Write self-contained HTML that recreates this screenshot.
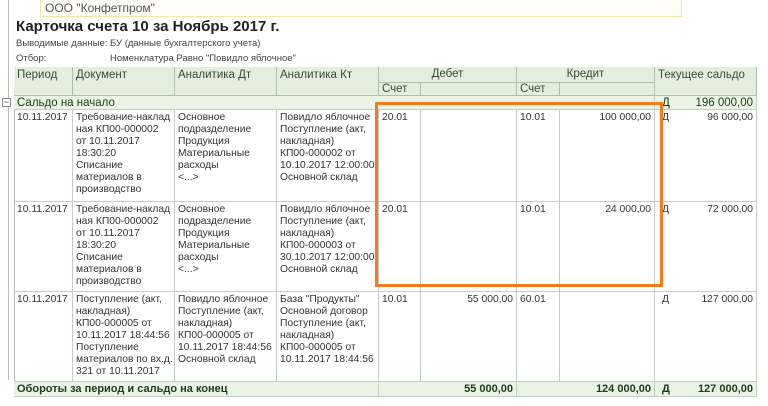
<!DOCTYPE html><html><head><meta charset="utf-8"><style>
body{margin:0;width:768px;height:406px;overflow:hidden;background:#fff;font-family:"Liberation Sans",sans-serif;color:#333;position:relative}
div{position:absolute;box-sizing:border-box}
.c{font-size:10.3px;line-height:12px;padding:2px 3px;border-right:1px solid #c2cfc2;border-bottom:1px solid #c2cfc2;white-space:nowrap;overflow:hidden}
.h{background:#e3efdc;border-color:#aebfae;font-size:11.5px;color:#3a4a3a}
.r{text-align:right}
.g{background:#eaf4e4}
.b{font-weight:bold;color:#1e3a1e;font-size:11px}
</style></head><body>
<div style="left:8px;top:0;width:1px;height:380px;background:#bbb"></div>
<div style="left:40px;top:0;width:642px;height:17px;border:1px solid #eee8a0;border-top:none;background:#fdfdf6;font-size:12px;padding:1px 4px;color:#555">ООО "Конфетпром"</div>
<div style="left:16px;top:18px;font-size:15px;font-weight:bold;color:#222">Карточка счета 10 за Ноябрь 2017 г.</div>
<div style="left:16px;top:38px;font-size:9.5px;color:#444">Выводимые данные:</div>
<div style="left:110px;top:38px;font-size:9.5px;color:#444">БУ (данные бухгалтерского учета)</div>
<div style="left:16px;top:53px;font-size:9.5px;color:#444">Отбор:</div>
<div style="left:110px;top:53px;font-size:9.5px;color:#444">Номенклатура Равно "Повидло яблочное"</div>
<div style="left:14px;top:67px;width:743px;height:1px;background:#aebfae"></div>
<div style="left:14px;top:67px;width:1px;height:330px;background:#aebfae"></div>
<!-- header -->
<div class="c h" style="left:14px;top:67px;width:59px;height:29px">Период</div>
<div class="c h" style="left:73px;top:67px;width:102px;height:29px">Документ</div>
<div class="c h" style="left:175px;top:67px;width:102px;height:29px">Аналитика Дт</div>
<div class="c h" style="left:277px;top:67px;width:102px;height:29px">Аналитика Кт</div>
<div class="c h" style="left:379px;top:67px;width:138px;height:16px;text-align:center;padding-top:1px">Дебет</div>
<div class="c h" style="left:517px;top:67px;width:138px;height:16px;text-align:center;padding-top:1px">Кредит</div>
<div class="c h" style="left:655px;top:67px;width:102px;height:29px">Текущее сальдо</div>
<div class="c h" style="left:379px;top:83px;width:42px;height:13px;padding-top:0">Счет</div>
<div class="c h" style="left:421px;top:83px;width:96px;height:13px"></div>
<div class="c h" style="left:517px;top:83px;width:43px;height:13px;padding-top:0">Счет</div>
<div class="c h" style="left:560px;top:83px;width:95px;height:13px"></div>
<!-- saldo start -->
<div style="left:2px;top:98px;width:9px;height:9px;border:1px solid #888;background:#fff;font-size:9px;line-height:6px;text-align:center">−</div>
<div class="c g" style="left:14px;top:96px;width:641px;height:14px;padding-top:1px;font-size:11.5px;color:#1e3a1e">Сальдо на начало</div>
<div class="c g" style="left:655px;top:96px;width:102px;height:14px;padding-top:1px;font-size:11.5px;color:#1e3a1e"><span style="position:absolute;left:7px">Д</span><span style="position:absolute;right:3px">196 000,00</span></div>
<!-- row1 -->
<div class="c" style="left:14px;top:110px;width:59px;height:92px">10.11.2017</div>
<div class="c" style="left:73px;top:110px;width:102px;height:92px">Требование-наклад<br>ная КП00-000002<br>от 10.11.2017<br>18:30:20<br>Списание<br>материалов в<br>производство</div>
<div class="c" style="left:175px;top:110px;width:102px;height:92px">Основное<br>подразделение<br>Продукция<br>Материальные<br>расходы<br>&lt;...&gt;</div>
<div class="c" style="left:277px;top:110px;width:102px;height:92px">Повидло яблочное<br>Поступление (акт,<br>накладная)<br>КП00-000002 от<br>10.10.2017 12:00:00<br>Основной склад</div>
<div class="c" style="left:379px;top:110px;width:42px;height:92px">20.01</div>
<div class="c" style="left:421px;top:110px;width:96px;height:92px"></div>
<div class="c" style="left:517px;top:110px;width:43px;height:92px">10.01</div>
<div class="c r" style="left:560px;top:110px;width:95px;height:92px">100 000,00</div>
<div class="c" style="left:655px;top:110px;width:102px;height:92px"><span style="position:absolute;left:7px">Д</span><span style="position:absolute;right:3px">96 000,00</span></div>
<!-- row2 -->
<div class="c" style="left:14px;top:202px;width:59px;height:90px">10.11.2017</div>
<div class="c" style="left:73px;top:202px;width:102px;height:90px">Требование-наклад<br>ная КП00-000002<br>от 10.11.2017<br>18:30:20<br>Списание<br>материалов в<br>производство</div>
<div class="c" style="left:175px;top:202px;width:102px;height:90px">Основное<br>подразделение<br>Продукция<br>Материальные<br>расходы<br>&lt;...&gt;</div>
<div class="c" style="left:277px;top:202px;width:102px;height:90px">Повидло яблочное<br>Поступление (акт,<br>накладная)<br>КП00-000003 от<br>30.10.2017 12:00:00<br>Основной склад</div>
<div class="c" style="left:379px;top:202px;width:42px;height:90px">20.01</div>
<div class="c" style="left:421px;top:202px;width:96px;height:90px"></div>
<div class="c" style="left:517px;top:202px;width:43px;height:90px">10.01</div>
<div class="c r" style="left:560px;top:202px;width:95px;height:90px">24 000,00</div>
<div class="c" style="left:655px;top:202px;width:102px;height:90px"><span style="position:absolute;left:7px">Д</span><span style="position:absolute;right:3px">72 000,00</span></div>
<!-- row3 -->
<div class="c" style="left:14px;top:292px;width:59px;height:90px">10.11.2017</div>
<div class="c" style="left:73px;top:292px;width:102px;height:90px">Поступление (акт,<br>накладная)<br>КП00-000005 от<br>10.11.2017 18:44:56<br>Поступление<br>материалов по вх.д.<br>321 от 10.11.2017</div>
<div class="c" style="left:175px;top:292px;width:102px;height:90px">Повидло яблочное<br>Поступление (акт,<br>накладная)<br>КП00-000005 от<br>10.11.2017 18:44:56<br>Основной склад</div>
<div class="c" style="left:277px;top:292px;width:102px;height:90px">База "Продукты"<br>Основной договор<br>Поступление (акт,<br>накладная)<br>КП00-000005 от<br>10.11.2017 18:44:56</div>
<div class="c" style="left:379px;top:292px;width:42px;height:90px">10.01</div>
<div class="c r" style="left:421px;top:292px;width:96px;height:90px">55 000,00</div>
<div class="c" style="left:517px;top:292px;width:43px;height:90px">60.01</div>
<div class="c" style="left:560px;top:292px;width:95px;height:90px"></div>
<div class="c" style="left:655px;top:292px;width:102px;height:90px"><span style="position:absolute;left:7px">Д</span><span style="position:absolute;right:3px">127 000,00</span></div>
<!-- footer -->
<div class="c g b" style="left:14px;top:382px;width:365px;height:15px;padding-top:1px">Обороты за период и сальдо на конец</div>
<div class="c g b r" style="left:379px;top:382px;width:138px;height:15px;padding-top:1px">55 000,00</div>
<div class="c g b r" style="left:517px;top:382px;width:138px;height:15px;padding-top:1px">124 000,00</div>
<div class="c g b" style="left:655px;top:382px;width:102px;height:15px;padding-top:1px"><span style="position:absolute;left:7px">Д</span><span style="position:absolute;right:3px">127 000,00</span></div>
<!-- orange box -->
<div style="left:375px;top:102px;width:288px;height:185px;border:3px solid #f47b20"></div>
</body></html>
